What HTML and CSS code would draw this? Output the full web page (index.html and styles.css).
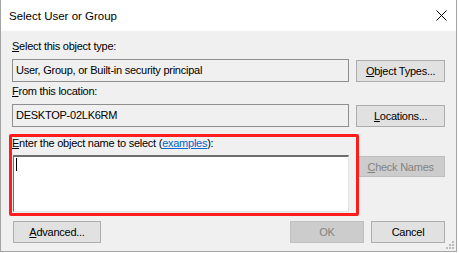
FILE: index.html
```html
<!DOCTYPE html>
<html lang="en">
<head>
    <meta charset="UTF-8">
    <title>Select User or Group</title>
    <link rel="stylesheet" href="styles.css">
</head>
<body>
    <div class="window">
        <div class="titlebar">
            <span class="title">Select User or Group</span>
            <svg class="close" width="11" height="11" viewBox="0 0 11 11">
                <path d="M0.5 0.5 L10.5 10.5 M10.5 0.5 L0.5 10.5" stroke="#000" stroke-width="1" fill="none"/>
            </svg>
        </div>

        <div class="content">
            <div class="label label-first"><u>S</u>elect this object type:</div>
            <div class="row">
                <div class="field readonly">User, Group, or Built-in security principal</div>
                <button class="btn side"><u>O</u>bject Types...</button>
            </div>

            <div class="label label-second"><u>F</u>rom this location:</div>
            <div class="row">
                <div class="field readonly">DESKTOP-02LK6RM</div>
                <button class="btn side"><u>L</u>ocations...</button>
            </div>

            <div class="label label-third"><u>E</u>nter the object name to select (<a href="#">examples</a>):</div>
            <div class="row">
                <div class="names"><span class="caret"></span></div>
                <button class="btn side check" disabled><u>C</u>heck Names</button>
            </div>

            <div class="footer">
                <button class="btn advanced"><u>A</u>dvanced...</button>
                <div class="actions">
                    <button class="btn small" disabled>OK</button>
                    <button class="btn small">Cancel</button>
                </div>
            </div>
        </div>

        <!-- highlight drawn over the name area -->
        <div class="highlight"></div>

        <svg class="grip" width="8" height="8" viewBox="0 0 8 8">
            <rect x="6" y="0" width="2" height="2" fill="#bcbcbc"/>
            <rect x="3" y="3" width="2" height="2" fill="#bcbcbc"/>
            <rect x="6" y="3" width="2" height="2" fill="#bcbcbc"/>
            <rect x="0" y="6" width="2" height="2" fill="#bcbcbc"/>
            <rect x="3" y="6" width="2" height="2" fill="#bcbcbc"/>
            <rect x="6" y="6" width="2" height="2" fill="#bcbcbc"/>
        </svg>
    </div>
</body>
</html>
```

FILE: styles.css
```css
body {
    margin: 0;
    background: #ffffff;
    font-family: "Liberation Sans", Arial, sans-serif;
    font-size: 11px;
    color: #000;
}
.window {
    position: relative;
    width: 455px;
    height: 251px;
    border: 1px solid #a5a5a5;
    border-top: none;
    background: #f0f0f0;
    overflow: hidden;
}
.titlebar {
    height: 31px;
    background: #fff;
    display: flex;
    align-items: center;
    justify-content: space-between;
    padding: 0 9px 0 8px;
    margin-left: -1px;
}
.title {
    font-size: 11.5px;
    padding-left: 1px;
}
.close {
    display: block;
    margin-top: -1px;
}
.content {
    padding: 9px 11px 0 11px;
    letter-spacing: -0.25px;
}
.label {
    line-height: 13px;
    height: 13px;
    white-space: nowrap;
}
.label-first { margin-bottom: 6px; }
.label-second { margin-top: 3px; margin-bottom: 6px; }
.label-third { margin-top: 10px; margin-bottom: 5px; }
.label a {
    color: #0066cc;
}
.row {
    display: flex;
    align-items: flex-start;
    gap: 7px;
}
.field {
    box-sizing: border-box;
    width: 338px;
    height: 23px;
    border: 1px solid #8f8f8f;
    padding: 0 3px;
    line-height: 21px;
    white-space: nowrap;
}
.readonly {
    background: #f0f0f0;
}
.btn {
    box-sizing: border-box;
    height: 22px;
    border: 1px solid #adadad;
    background: #e1e1e1;
    font-family: inherit;
    font-size: 11px;
    letter-spacing: inherit;
    color: #000;
    padding: 0;
    margin: 0;
    white-space: nowrap;
}
.btn:disabled {
    background: #cccccc;
    border-color: #bfbfbf;
    color: #838383;
}
.side {
    width: 89px;
    margin-top: 1px;
}
.check {
    height: 21px;
}
.names {
    box-sizing: border-box;
    width: 337px;
    height: 57px;
    margin-left: 1px;
    background: #fff;
    border: 1px solid #e3e3e3;
    border-top: 2px solid #6d6d6d;
    border-left: 1px solid #6d6d6d;
    padding: 1px 2px;
}
.caret {
    display: block;
    width: 1px;
    height: 13px;
    background: #000;
}
.footer {
    display: flex;
    justify-content: space-between;
    margin-top: 9px;
}
.advanced {
    width: 88px;
    margin-left: 1px;
}
.actions {
    display: flex;
    gap: 7px;
}
.small {
    width: 74px;
}
.highlight {
    position: absolute;
    left: 8px;
    top: 134px;
    width: 344px;
    height: 76px;
    border: 3px solid #ff1c1c;
    border-radius: 2px;
}
.grip {
    position: absolute;
    right: 2px;
    bottom: 2px;
}
```
